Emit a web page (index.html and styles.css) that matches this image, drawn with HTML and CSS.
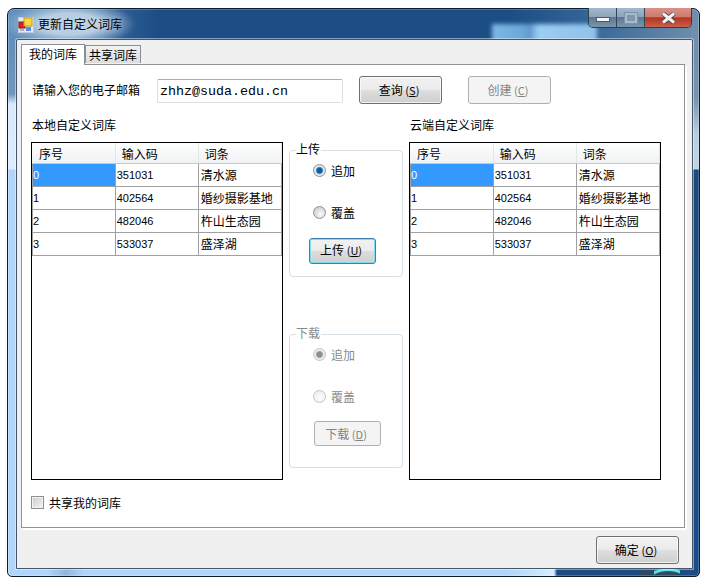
FILE: index.html
```html
<!DOCTYPE html>
<html lang="zh-CN">
<head>
<meta charset="utf-8">
<title>更新自定义词库</title>
<link rel="stylesheet" href="styles.css">
</head>
<body>
<div class="window">
  <div class="titlebar">
    <svg class="app-icon" width="16" height="16" viewBox="0 0 16 16">
      <rect x="0.5" y="0.5" width="15" height="15" fill="#e4e8ee" stroke="#c3ccd8"/>
      <rect x="1" y="5" width="6" height="6" fill="#d8261c" stroke="#8a1a12"/>
      <rect x="6" y="1" width="8" height="8" fill="#f8d848" stroke="#c49a10"/>
      <rect x="8" y="10" width="5" height="4" fill="#5a8fdc"/>
      <rect x="2" y="12" width="4" height="2" fill="#9fb4d0"/>
    </svg>
    <span class="title">更新自定义词库</span>
    <div class="controls">
      <div class="ctl ctl-min"><span class="glyph-min"></span></div>
      <div class="ctl ctl-max"><span class="glyph-max"></span></div>
      <div class="ctl ctl-close">
        <svg width="17" height="12" viewBox="0 0 17 12"><path d="M3 1.5 L14 10.5 M14 1.5 L3 10.5" stroke="#3a3f4a" stroke-width="4.6"/><path d="M3 1.5 L14 10.5 M14 1.5 L3 10.5" stroke="#f4f4f4" stroke-width="3"/></svg>
      </div>
    </div>
  </div>
  <div class="client">
    <div class="tabs">
      <div class="tab tab-active">我的词库</div>
      <div class="tab">共享词库</div>
    </div>
    <div class="pane">
      <div class="top-row">
        <label class="email-label">请输入您的电子邮箱</label>
        <input class="email" type="text" value="zhhz@suda.edu.cn">
        <button class="btn btn-query">查询 <span class="key">(<u>S</u>)</span></button>
        <button class="btn btn-create" disabled>创建 <span class="key">(<u>C</u>)</span></button>
      </div>
      <div class="columns">
        <section class="col">
          <div class="col-label">本地自定义词库</div>
          <div class="grid-box">
            <table class="grid">
              <thead><tr><th>序号</th><th>输入码</th><th>词条</th></tr></thead>
              <tbody>
                <tr><td class="sel">0</td><td class="num">351031</td><td>清水源</td></tr>
                <tr><td class="num">1</td><td class="num">402564</td><td>婚纱摄影基地</td></tr>
                <tr><td class="num">2</td><td class="num">482046</td><td>杵山生态园</td></tr>
                <tr><td class="num">3</td><td class="num">533037</td><td>盛泽湖</td></tr>
              </tbody>
            </table>
          </div>
        </section>
        <section class="mid">
          <div class="group group-up">
            <span class="legend">上传</span>
            <label class="radio-row"><input type="radio" name="up" checked><span>追加</span></label>
            <label class="radio-row"><input type="radio" name="up"><span>覆盖</span></label>
            <button class="btn btn-upload">上传 <span class="key">(<u>U</u>)</span></button>
          </div>
          <div class="group group-down">
            <span class="legend legend-off">下载</span>
            <label class="radio-row row-off"><input type="radio" name="down" checked disabled><span>追加</span></label>
            <label class="radio-row row-off"><input type="radio" name="down" disabled><span>覆盖</span></label>
            <button class="btn btn-download" disabled>下载 <span class="key">(<u>D</u>)</span></button>
          </div>
        </section>
        <section class="col">
          <div class="col-label">云端自定义词库</div>
          <div class="grid-box">
            <table class="grid">
              <thead><tr><th>序号</th><th>输入码</th><th>词条</th></tr></thead>
              <tbody>
                <tr><td class="sel">0</td><td class="num">351031</td><td>清水源</td></tr>
                <tr><td class="num">1</td><td class="num">402564</td><td>婚纱摄影基地</td></tr>
                <tr><td class="num">2</td><td class="num">482046</td><td>杵山生态园</td></tr>
                <tr><td class="num">3</td><td class="num">533037</td><td>盛泽湖</td></tr>
              </tbody>
            </table>
          </div>
        </section>
      </div>
      <label class="share"><input type="checkbox"><span>共享我的词库</span></label>
    </div>
    <div class="footer">
      <button class="btn btn-ok">确定 <span class="key">(<u>O</u>)</span></button>
    </div>
  </div>
</div>
</body>
</html>
```
FILE: styles.css
```css
* { box-sizing: border-box; }
html, body { margin: 0; padding: 0; background: #fff; }
body {
  width: 706px;
  height: 580px;
  overflow: hidden;
  font-family: "Noto Sans CJK SC", "Liberation Sans", sans-serif;
  font-size: 12px;
  color: #000;
}
.window {
  width: 693px;
  height: 569px;
  margin: 8px 0 0 7px;
  padding: 0 6px 7px 8px;
  border: 1px solid #0f1c2b;
  border-radius: 7px 7px 5px 5px;
  display: flex;
  flex-direction: column;
  box-shadow: inset 0 0 0 1px rgba(255,255,255,.22);
  background:
    radial-gradient(ellipse 24px 13px at 14px 13px, transparent 0 72%, #5fe0e0 80% 92%, transparent 100%) 646px 559px / 26px 8px no-repeat,
    radial-gradient(ellipse 22px 9px at 650px 568px, #2b4a63 0 94%, transparent 100%),
    linear-gradient(90deg, #b1d5f8 0, #b1d5f8 40px, #92b6d8 58px, #b1d5f8 76px, #b1d5f8 500px, #d8ecff 546px, #1b4c84 549px, #1b4c84 100%) 0 100% / 100% 8px no-repeat,
    linear-gradient(180deg, #6f8dac 0, #7793b0 90px, #b9cfe0 125px, #c0d4e4 160px, #1a4a80 161px, #1a4e88 100%) 100% 0 / 8px 100% no-repeat,
    radial-gradient(ellipse 66px 24px at 62px 15px, #b6cde3 0 45%, transparent 100%),
    linear-gradient(90deg, #5f90bf 0, #1c4d85 150px, #1c4d85 500px, #2f6294 570px, #6f8fac 100%) 0 0 / 100% 31px no-repeat,
    linear-gradient(180deg, #5c8ab8 0, #6f97bd 85px, #d8e9fb 95px, #dcecff 160px, #b1d5f8 161px, #b1d5f8 100%);
}
.titlebar {
  height: 30px;
  flex: none;
  display: flex;
  align-items: flex-start;
  position: relative;
}
.titlebar::before {
  content: "";
  position: absolute;
  left: 476px;
  top: 15px;
  width: 105px;
  height: 18px;
  filter: blur(2px);
  background: linear-gradient(90deg, #7db8e6 0, #6da6d8 30%, #5f97cc 36%, #9ccdf2 44%, #8fc2ea 100%);
}
.app-icon { margin: 8px 0 0 2px; position: relative; }
.title {
  margin: 6px 0 0 4px;
  line-height: 18px;
  position: relative;
  text-shadow: 0 0 6px rgba(255,255,255,.55);
}
.controls {
  margin-left: auto;
  margin-right: 1px;
  margin-top: -1px;
  display: flex;
  height: 20px;
  position: relative;
  border: 1px solid #2c3e52;
  border-top: 0;
  border-radius: 0 0 5px 5px;
  overflow: hidden;
}
.ctl {
  height: 19px;
  display: flex;
  align-items: center;
  justify-content: center;
  border-right: 1px solid #31465c;
}
.ctl-min, .ctl-max {
  width: 28px;
  background: linear-gradient(180deg, #a4b8cc 0, #8ea4bb 45%, #5f7891 50%, #7b95ad 100%);
}
.ctl-close {
  width: 46px;
  border-right: 0;
  background: linear-gradient(180deg, #d9918a 0, #cf7b70 45%, #b5341f 52%, #c9604d 100%);
}
.glyph-min {
  width: 14px;
  height: 5px;
  margin-top: 4px;
  background: #f6f6f6;
  border: 1px solid #4a5a6c;
}
.glyph-max {
  width: 12px;
  height: 10px;
  border: 2px solid #a6bbcf;
  outline: 1px solid #7b93ab;
  background: #7e97af;
}
.client {
  flex: 1;
  display: flex;
  flex-direction: column;
  padding: 4px 4px 0;
  position: relative;
  background: #f0f0f0;
  border: 1px solid #43566a;
  border-radius: 2px 2px 0 0;
  box-shadow: 0 0 0 1px rgba(255,255,255,.45);
}
.tabs {
  height: 20px;
  flex: none;
  display: flex;
  align-items: flex-end;
  position: relative;
  z-index: 1;
}
.tab {
  height: 18px;
  width: 56px;
  text-align: center;
  line-height: 18px;
  border: 1px solid #8a8e98;
  border-bottom: 0;
  margin-bottom: 1px;
  background: linear-gradient(180deg, #f2f2f2, #dcdcdc);
}
.tab-active {
  width: 64px;
  height: 21px;
  background: #fff;
  margin-bottom: -1px;
}
.pane {
  height: 464px;
  flex: none;
  background: #fff;
  border: 1px solid #8f9296;
  margin-right: 3px;
  box-shadow: 2px 2px 0 #fff;
  display: flex;
  flex-direction: column;
}
.top-row {
  height: 28px;
  margin-top: 11px;
  padding-left: 10px;
  display: flex;
  align-items: center;
  flex: none;
}
.email-label { width: 125px; padding-bottom: 2px; }
.email {
  width: 186px;
  height: 24px;
  margin: 2px 16px 0 0;
  padding: 0 2px;
  border: 1px solid #dbdfe6;
  border-top-color: #abadb3;
  border-radius: 2px;
  font-family: "Liberation Mono", monospace;
  font-size: 13.33px;
  color: #000;
}
.btn {
  padding: 0 3px 2px 0;
  font-family: inherit;
  font-size: 12px;
  color: #000;
  border: 1px solid #707070;
  border-radius: 3px;
  background: linear-gradient(180deg, #f2f2f2 0, #ebebeb 48%, #dddddd 52%, #cfcfcf 100%);
  box-shadow: inset 0 0 0 1px rgba(255,255,255,.7);
}
.btn[disabled] {
  color: #838383;
  border-color: #adb2b5;
  background: #f4f4f4;
  box-shadow: none;
}
.key { font-size: 11px; }
.btn-query, .btn-create, .btn-ok { width: 83px; height: 28px; }
.btn-create { margin-left: 26px; }
.columns {
  flex: none;
  margin: 13px 0 0 9px;
  display: grid;
  grid-template-columns: 252px 114px 252px;
  column-gap: 6px;
}
.col-label {
  height: 25px;
  padding-left: 1px;
  line-height: 16px;
}
.grid-box {
  height: 338px;
  border: 1px solid #000;
  background: #fff;
}
.grid {
  width: 250px;
  table-layout: fixed;
  border-collapse: collapse;
}
.grid th {
  height: 20px;
  padding: 2px 0 0 6px;
  font-weight: 400;
  text-align: left;
  border-right: 1px solid #e4e6e8;
  border-bottom: 1px solid #c8c8c8;
  background: linear-gradient(180deg, #ffffff 0, #f7f8f9 45%, #f0f1f2 100%);
}
.grid th:first-child { padding-left: 7px; }
.grid td {
  height: 23px;
  padding: 0 0 0 1px;
  white-space: nowrap;
  border-right: 1px solid #a0a0a0;
  border-bottom: 1px solid #a0a0a0;
}
.grid td:first-child { box-shadow: inset 1px 0 0 #a0a0a0; }
.grid td:last-child { padding-left: 2px; border-right: 0; box-shadow: inset -1px 0 0 #a0a0a0; }
.grid td.num {
  font-family: "Liberation Sans", sans-serif;
  font-size: 11px;
}
.grid td.sel {
  background: #3399ff;
  color: #fff;
  font-family: "Liberation Sans", sans-serif;
  font-size: 11px;
}
.mid {
  padding-top: 33px;
  display: flex;
  flex-direction: column;
}
.group {
  position: relative;
  display: flex;
  flex-direction: column;
  align-items: flex-start;
  padding-top: 11px;
  border: 1px solid #d5dfe5;
  border-radius: 4px;
}
.group-up { height: 127px; }
.group-down { height: 134px; margin-top: 57px; }
.legend {
  position: absolute;
  left: 6px;
  top: -9px;
  padding: 0 1px 0 0;
  line-height: 14px;
  background: #fff;
}
.legend-off, .row-off { color: #8a8a8a; }
.radio-row {
  height: 16px;
  margin-left: 23px;
  margin-bottom: 26px;
  display: flex;
  align-items: center;
  gap: 5px;
}
.radio-row input {
  appearance: none;
  width: 13px;
  height: 13px;
  margin: 0;
  border: 1px solid #8e8f8f;
  border-radius: 50%;
  background: radial-gradient(circle at 60% 65%, #fafafa 0, #e0e0e0 45%, #c4c4c4 100%);
}
.radio-row input:checked {
  background: radial-gradient(circle, #0f5d9c 0 2.2px, #4a94c8 3.2px, #e8eef2 4.2px, #cfd3d6 100%);
}
.radio-row input:disabled {
  border-color: #c4c4c4;
  background: radial-gradient(circle at 60% 65%, #fbfbfb 0, #ececec 100%);
}
.radio-row input:disabled:checked {
  background: radial-gradient(circle, #8d8d8d 0 2.2px, #b0b0b0 3.2px, #f0f0f0 4.2px, #dcdcdc 100%);
}
.btn-upload {
  width: 67px;
  height: 26px;
  margin: -8px 0 0 19px;
  padding-bottom: 4px;
  border-color: #3c7fb1;
  box-shadow: inset 0 0 0 1px #7fdcf4;
}
.btn-download {
  width: 67px;
  height: 25px;
  margin: -9px 0 0 24px;
  padding-bottom: 0;
}
.share {
  margin: 15px 0 0 9px;
  height: 14px;
  display: flex;
  align-items: center;
  gap: 5px;
}
.share input {
  appearance: none;
  width: 13px;
  height: 13px;
  margin: 0;
  border: 1px solid #8e8f8f;
  box-shadow: inset 0 0 0 1px #f2f2f2;
  background: linear-gradient(135deg, #c9c9c9, #f6f6f6);
}
.footer {
  flex: 1;
  display: flex;
  justify-content: flex-end;
  align-items: flex-start;
  padding: 8px 9px 0 0;
}
```
